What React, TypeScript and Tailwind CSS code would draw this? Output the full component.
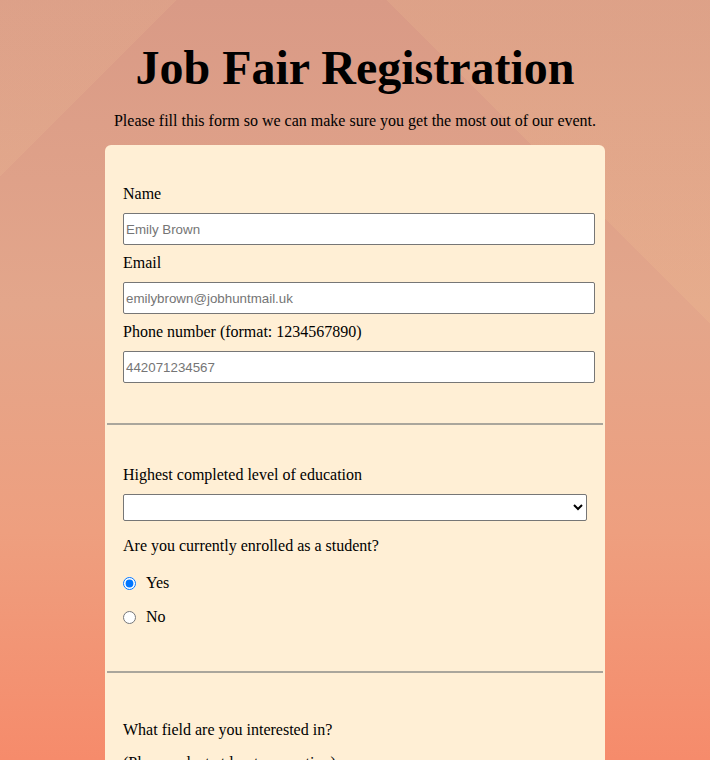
import React from "react";

const serif = "font-['Liberation_Serif','Times_New_Roman',serif]";
const inputCls =
  "block w-[472px] h-[32px] mt-[10px] mb-[9px] px-[2px] bg-white border border-[#767676] rounded-[2px] font-['Liberation_Sans',Arial,sans-serif] text-[13.33px] text-black placeholder:text-[#757575] outline-none";

export default function App() {
  return (
    <div
      className={`min-h-screen w-full bg-fixed ${serif} text-black bg-[linear-gradient(135deg,rgba(255,220,160,0.10)_0%,rgba(255,220,160,0.10)_12%,transparent_12%,transparent_100%),linear-gradient(225deg,rgba(255,215,150,0.12)_0%,rgba(255,215,150,0.12)_22%,transparent_22%,transparent_100%),linear-gradient(180deg,#d99a86_0%,#e3a68b_40%,#ee9f7f_70%,#f68b6b_100%)]`}
    >
      <div className="flex flex-col items-center pt-[40px] pb-[40px]">
        <h1 className="text-[48px] font-bold leading-[55px]">Job Fair Registration</h1>
        <p className="text-[16px] leading-[18px] mt-[17px]">
          Please fill this form so we can make sure you get the most out of our event.
        </p>
        <form className="mt-[15px] w-[500px] bg-[#ffefd5] rounded-[6px] px-[2px] text-[16px] leading-[18px]">
          <div className="px-[16px] pt-[40px] pb-[31px]">
            <label className="block">Name</label>
            <input className={inputCls} placeholder="Emily Brown" />
            <label className="block">Email</label>
            <input className={inputCls} placeholder="emilybrown@jobhuntmail.uk" />
            <label className="block">Phone number (format: 1234567890)</label>
            <input className={`${inputCls} mb-0`} placeholder="442071234567" />
          </div>
          <hr className="border-0 h-[2px] bg-[#aaa69c]" />
          <div className="px-[16px] pt-[41px] pb-[45px]">
            <label className="block">Highest completed level of education</label>
            <select className="block w-[464px] h-[27px] mt-[10px] bg-white border border-[#767676] rounded-[2px] font-['Liberation_Sans',Arial,sans-serif] text-[13.33px]">
              <option value=""></option>
              <option>High school</option>
              <option>Bachelor's degree</option>
              <option>Master's degree</option>
              <option>Doctorate</option>
            </select>
            <p className="mt-[16px]">Are you currently enrolled as a student?</p>
            <div className="flex items-center mt-[19px] h-[18px]">
              <input type="radio" name="student" defaultChecked className="w-[13px] h-[13px] m-0 accent-[#0075ff]" />
              <span className="ml-[10px]">Yes</span>
            </div>
            <div className="flex items-center mt-[16px] h-[18px]">
              <input type="radio" name="student" className="w-[13px] h-[13px] m-0" />
              <span className="ml-[10px]">No</span>
            </div>
          </div>
          <hr className="border-0 h-[2px] bg-[#aaa69c]" />
          <div className="px-[16px] pt-[48px] pb-[40px]">
            <p>What field are you interested in?</p>
            <p className="mt-[15px]">(Please select at least one option)</p>
            <div className="flex flex-col gap-[14px] mt-[16px]">
              {["Software development", "Marketing", "Finance", "Design", "Healthcare"].map((f) => (
                <div key={f} className="flex items-center h-[18px]">
                  <input type="checkbox" className="w-[13px] h-[13px] m-0" />
                  <span className="ml-[10px]">{f}</span>
                </div>
              ))}
            </div>
          </div>
        </form>
      </div>
    </div>
  );
}
